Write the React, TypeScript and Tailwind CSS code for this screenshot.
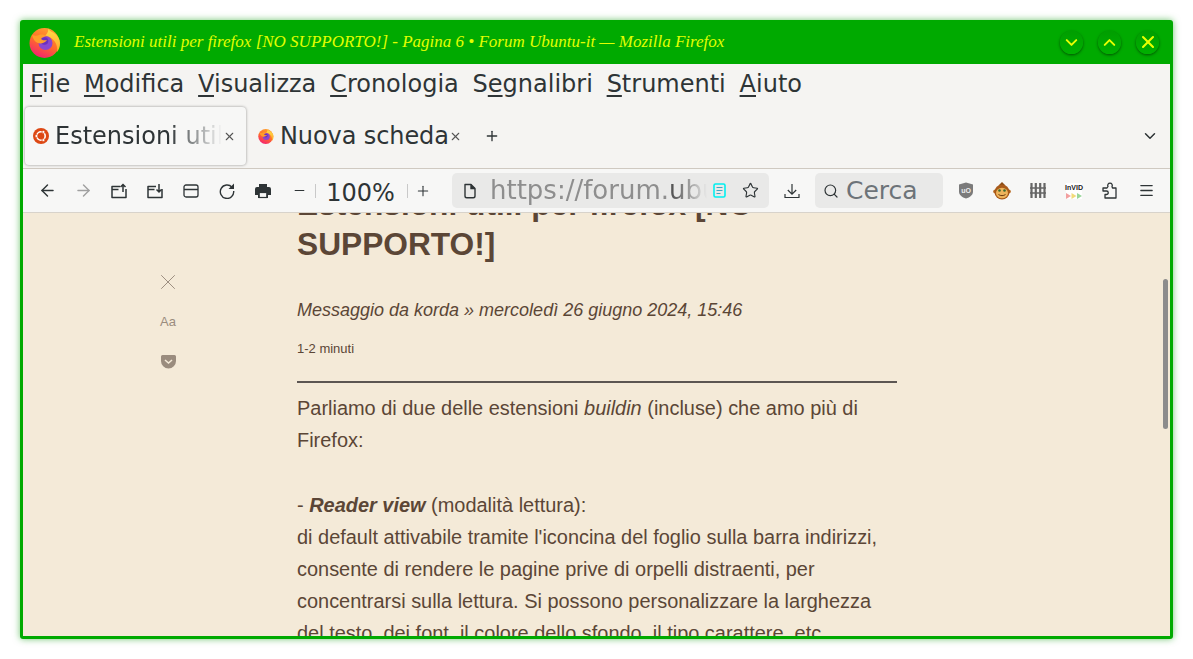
import { ReactNode } from "react";
import { ArrowLeft, ArrowRight, Star, Search, Menu, Plus, Minus, X, ChevronDown, ChevronUp } from "lucide-react";

const menuItems = [
  ["F", "ile"],
  ["M", "odifica"],
  ["V", "isualizza"],
  ["C", "ronologia"],
  ["Se", "gnalibri", "g"],
  ["S", "trumenti"],
  ["A", "iuto"],
];

const FirefoxLogo = ({ size }: { size: number }) => (
  <svg width={size} height={size} viewBox="0 0 32 32">
    <defs>
      <linearGradient id={`ff${size}`} x1="0.7" y1="0.1" x2="0.3" y2="0.95">
        <stop offset="0" stopColor="#ff9a2e" />
        <stop offset="0.5" stopColor="#ff6a2a" />
        <stop offset="1" stopColor="#f5256e" />
      </linearGradient>
      <linearGradient id={`fl${size}`} x1="0.5" y1="0" x2="0.5" y2="1">
        <stop offset="0" stopColor="#ffe24a" />
        <stop offset="1" stopColor="#ffa62a" />
      </linearGradient>
    </defs>
    <circle cx="15.500" cy="17" r="15" fill={`url(#ff${size})`} />
    <path d="M19 0c0 4 2 5 6 7 4 3 6 6 6 10 0 4-1 6-3 9 1-8-3-15-12-16 3-3 4-6 3-10z" fill={`url(#fl${size})`} />
    <circle cx="16.500" cy="17" r="7" fill="#8a46cf" />
    <circle cx="15.500" cy="15" r="3.800" fill="#6a2fc0" />
    <path d="M3 9c3 1 5 1 7 0 3-1 6 0 8 1-3 1-5 1-6 3 2 2 4 1 6 1-2 3-6 4-9 3-3-1-5-4-6-8z" fill="#ff9d2a" />
  </svg>
);

const UbuntuLogo = () => (
  <svg width="16" height="16" viewBox="0 0 16 16">
    <circle cx="8" cy="8" r="8" fill="#dd4814" />
    <circle cx="8" cy="8" r="4.200" fill="none" stroke="#fff" strokeWidth="1.600" />
    <circle cx="3.400" cy="8" r="1.500" fill="#fff" stroke="#dd4814" strokeWidth="0.700" />
    <circle cx="10.400" cy="3.900" r="1.500" fill="#fff" stroke="#dd4814" strokeWidth="0.700" />
    <circle cx="10.400" cy="12.100" r="1.500" fill="#fff" stroke="#dd4814" strokeWidth="0.700" />
  </svg>
);

const TitleButton = ({ children }: { children: ReactNode }) => (
  <div className="flex h-[23px] w-[23px] items-center justify-center rounded-full bg-gradient-to-b from-[#009e00] to-[#00b000] text-[#e8ff00] shadow-[0_1px_3px_rgba(0,60,0,0.8)]">
    {children}
  </div>
);

const ToolButton = ({ children, className }: { children: ReactNode; className?: string }) => (
  <div className={`flex h-9 w-9 shrink-0 items-center justify-center text-[#2e3436] ${className ?? ""}`}>
    {children}
  </div>
);

// cartella con freccia, su o giu
const FolderIcon = ({ down }: { down?: boolean }) => (
  <svg width="16" height="16" viewBox="0 0 16 16" fill="none" stroke="currentColor" strokeWidth="1.500">
    <path d="M9 3.500H1v11h14V6M1 6.500h6.500" strokeLinejoin="round" />
    {down ? <path d="M12 1v8M9.500 6.500 12 9l2.500-2.500" /> : <path d="M12 9V1.500M9.500 4 12 1.500 14.500 4" />}
  </svg>
);

const PrintIcon = () => (
  <svg width="16" height="16" viewBox="0 0 16 16">
    <path d="M4 1h8v3h2a2 2 0 0 1 2 2v6h-3v3H3v-3H0V6a2 2 0 0 1 2-2h2z" fill="currentColor" />
    <rect x="4.200" y="9.500" width="7.600" height="5" fill="#f7f7f6" stroke="currentColor" strokeWidth="1.200" />
  </svg>
);

const ReloadIcon = () => (
  <svg width="16" height="16" viewBox="0 0 16 16" fill="none" stroke="currentColor" strokeWidth="1.400">
    <path d="M13 4.200A6.700 6.700 0 1 0 14.700 8" />
    <path d="M15 .5v5.500H9.500z" fill="currentColor" stroke="none" />
  </svg>
);

const DocIcon = () => (
  <svg width="14" height="16" viewBox="0 0 14 16" fill="none" stroke="#2e3436" strokeWidth="1.400">
    <path d="M2 1.500h6l4 4v7.500a1.800 1.800 0 0 1-1.800 1.800H3.800A1.800 1.800 0 0 1 2 13z" strokeLinejoin="round" />
    <path d="M8 1.500v4h4" fill="#2e3436" />
  </svg>
);

const App = () => {
  return (
    <div className="h-[659px] w-[1193px] overflow-hidden bg-white p-5 font-['DejaVu_Sans',sans-serif]">
      <div className="flex h-[619px] w-[1153px] flex-col overflow-hidden rounded-[3px] bg-[#00aa00] px-[3px] pb-[3px] shadow-[0_0_7px_rgba(0,150,0,0.55)]">
        {/* title bar */}
        <div className="flex h-[44px] shrink-0 items-center pl-[6px] pr-[11px]">
          <FirefoxLogo size={32} />
          <div className="ml-[13px] font-['Liberation_Serif',serif] text-[17px] italic text-[#e2ff00]">
            Estensioni utili per firefox [NO SUPPORTO!] - Pagina 6 • Forum Ubuntu-it — Mozilla Firefox
          </div>
          <div className="ml-auto flex gap-[15px]">
            <TitleButton>
              <ChevronDown size={19} strokeWidth={2.500} />
            </TitleButton>
            <TitleButton>
              <ChevronUp size={19} strokeWidth={2.500} />
            </TitleButton>
            <TitleButton>
              <X size={20} strokeWidth={2.500} />
            </TitleButton>
          </div>
        </div>

        {/* menu */}
        <div className="flex h-[40px] shrink-0 items-center gap-[13.8px] bg-[#f5f4f2] pl-[7px] text-[24px] text-[#2e3436]">
          {menuItems.map((m) => (
            <span key={m[1]}>
              {m[2] ? (
                <>
                  S<span className="underline underline-offset-[3px]">e</span>
                  {m[1]}
                </>
              ) : (
                <>
                  <span className="underline underline-offset-[3px]">{m[0]}</span>
                  {m[1]}
                </>
              )}
            </span>
          ))}
        </div>

        {/* tabs */}
        <div className="flex h-[65px] shrink-0 items-center border-b border-[#cfc9c1] bg-[#f5f4f2] pl-[2px] text-[24px] text-[#2e3436]">
          <div className="flex h-[58px] w-[221px] items-center rounded-[4px] bg-[#f7f7f6] pl-[8px] shadow-[0_0_3px_rgba(0,0,0,0.4)]">
            <UbuntuLogo />
            <span className="ml-[6px] w-[167px] overflow-hidden whitespace-nowrap [mask-image:linear-gradient(to_right,black_68%,transparent_100%)]">
              Estensioni utili per firefox
            </span>
            <X size={13} className="ml-[1px] text-[#555]" />
          </div>
          <div className="ml-[12px] flex items-center">
            <FirefoxLogo size={16} />
            <span className="ml-[6px] tracking-[-0.1px]">Nuova scheda</span>
            <X size={13} className="text-[#555]" />
          </div>
          <Plus size={16} className="ml-[22px] text-[#2e3436]" />
          <ChevronDown size={18} className="ml-auto mr-[11px] text-[#2e3436]" />
        </div>

        {/* toolbar */}
        <div className="flex h-[44px] shrink-0 items-center border-b border-[#d8d3cb] bg-[#f7f7f6] pl-[6px]">
          <ToolButton>
            <ArrowLeft size={19} strokeWidth={1.800} />
          </ToolButton>
          <ToolButton className="!text-[#a0a0a0]">
            <ArrowRight size={19} strokeWidth={1.800} />
          </ToolButton>
          <ToolButton>
            <FolderIcon />
          </ToolButton>
          <ToolButton>
            <FolderIcon down />
          </ToolButton>
          <ToolButton>
            <svg width="16" height="14" viewBox="0 0 16 14" fill="none" stroke="currentColor" strokeWidth="1.300">
              <rect x="1" y="1" width="14" height="12" rx="2" />
              <path d="M1 5.500h14" />
            </svg>
          </ToolButton>
          <ToolButton>
            <ReloadIcon />
          </ToolButton>
          <ToolButton>
            <PrintIcon />
          </ToolButton>
          <ToolButton className="-mr-[2px]">
            <Minus size={15} strokeWidth={1.600} />
          </ToolButton>
          <div className="h-[14px] w-px bg-[#c9c9c9]" />
          <div className="w-[91px] pr-[2px] pt-[4px] text-center text-[24px] leading-none text-[#2e3436]">100%</div>
          <div className="h-[14px] w-px bg-[#c9c9c9]" />
          <div className="flex w-[30px] justify-center text-[#2e3436]">
            <Plus size={16} strokeWidth={1.600} />
          </div>
          <div className="ml-[14px] flex h-[35px] w-[317px] items-center rounded-[5px] bg-[#e9e9e8] pl-[11px]">
            <DocIcon />
            <span className="ml-[13px] w-[217px] overflow-hidden whitespace-nowrap text-[26px] text-[#8e8e8e] [mask-image:linear-gradient(to_right,black_84%,transparent_100%)]">
              https://forum.<span className="text-[#555]">ubuntu-it.org</span>
            </span>
            <svg width="13" height="15" viewBox="0 0 13 15" fill="none" stroke="#00f0f0" strokeWidth="1.600" className="ml-[6px]">
              <rect x="1" y="1" width="11" height="13" rx="1.500" />
              <path d="M3.500 4.500h6M3.500 7.500h6M3.500 10.500h4" stroke="#3fa7c4" strokeWidth="1.100" />
            </svg>
            <Star size={17} strokeWidth={1.600} className="ml-[16px] text-[#2e3436]" />
          </div>
          <ToolButton className="ml-[5px]">
            <svg width="16" height="16" viewBox="0 0 16 16" fill="none" stroke="currentColor" strokeWidth="1.200">
              <path d="M8 1v10M3.800 7 8 11.200 12.200 7M1 11v3.500h14V11" />
            </svg>
          </ToolButton>
          <div className="ml-[5px] flex h-[35px] w-[128px] items-center rounded-[5px] bg-[#e9e9e8] pl-[8px]">
            <Search size={16} strokeWidth={1.800} className="text-[#2e3436]" />
            <span className="ml-[7px] text-[25px] text-[#6d7378]">Cerca</span>
          </div>
          <ToolButton className="ml-[5px]">
            <svg width="16" height="17" viewBox="0 0 16 17">
              <path d="M8 .5 15 2.500v7c0 3.500-3 5.800-7 7-4-1.200-7-3.500-7-7v-7z" fill="#7b7b7b" />
              <text x="8" y="10.500" textAnchor="middle" fontSize="7" fontFamily="Liberation Sans" fontWeight="700" fill="#eee">
                uO
              </text>
            </svg>
          </ToolButton>
          <ToolButton>
            <svg width="18" height="18" viewBox="0 0 18 18">
              <path d="M9 0 12 3H6z" fill="#8a4b14" />
              <circle cx="2.200" cy="9.500" r="2" fill="#b5651d" />
              <circle cx="15.800" cy="9.500" r="2" fill="#b5651d" />
              <circle cx="9" cy="10" r="7.500" fill="#a85a1a" />
              <ellipse cx="9" cy="11" rx="6" ry="5.300" fill="#eeb45c" />
              <circle cx="6.500" cy="8.500" r="1.300" fill="#3a6b30" />
              <circle cx="11.500" cy="8.500" r="1.300" fill="#3a6b30" />
              <path d="M5.500 12.500c2 1.500 5 1.500 7 0" stroke="#6a3a10" strokeWidth="1" fill="none" />
            </svg>
          </ToolButton>
          <ToolButton>
            <svg width="16" height="15" viewBox="0 0 16 15" stroke="#666" fill="none">
              <path d="M1.500 0v15M5.800 0v15M10.200 0v15M14.500 0v15" strokeWidth="2.200" />
              <path d="M0 5h16M0 10h16" strokeWidth="1.500" />
            </svg>
          </ToolButton>
          <ToolButton>
            <div className="flex h-[16px] w-[16px] flex-col items-center bg-white">
              <span className="font-['Liberation_Sans',sans-serif] text-[7px] font-bold leading-[10px] text-[#222]">InVID</span>
              <svg width="16" height="6" viewBox="0 0 16 6">
                <path d="M0 0l5 3-5 3z" fill="#f2a0a0" />
                <path d="M5.500 0l5 3-5 3z" fill="#f2dc7a" />
                <path d="M11 0l5 3-5 3z" fill="#9ad69a" />
              </svg>
            </div>
          </ToolButton>
          <ToolButton>
            <svg width="16" height="17" viewBox="0 0 16 17" fill="none" stroke="currentColor" strokeWidth="1.300" strokeLinejoin="round">
              <path d="M1 6h4l1-1.500a2.300 2.300 0 1 1 4 0L10.500 6H14v10H3v-3.500h1.500a1.700 1.700 0 0 0 0-3.500H1z" />
            </svg>
          </ToolButton>
          <ToolButton>
            <Menu size={17} strokeWidth={1.800} />
          </ToolButton>
        </div>

        {/* reader view */}
        <div className="relative flex min-h-0 flex-1 overflow-hidden bg-[#f4ead8] font-['Liberation_Sans',sans-serif] text-[#5b4636]">
          <div className="ml-[122px] mr-[106px] flex w-[46px] shrink-0 flex-col items-center pt-[56px] text-[#9a8c7e]">
            <X size={26} strokeWidth={0.900} />
            <span className="mt-[17px] h-[20px] text-[13px] leading-[20px]">Aa</span>
            <svg width="15" height="14" viewBox="0 0 15 14" className="mt-[23px]">
              <path d="M1.500 0h12A1.500 1.500 0 0 1 15 1.500V6a7.500 7.500 0 0 1-15 0V1.500A1.500 1.500 0 0 1 1.500 0z" fill="#9a8c7e" />
              <path d="M4 5l3.500 3L11 5" stroke="#f4ead8" strokeWidth="1.600" fill="none" />
            </svg>
          </div>
          <div className="-mt-[29px] w-[600px] shrink-0">
            <h1 className="text-[31.700px] font-bold leading-[40px]">Estensioni utili per firefox [NO SUPPORTO!]</h1>
            <div className="mt-[30px] text-[18px] italic leading-[32px]">
              Messaggio da korda » mercoledì 26 giugno 2024, 15:46
            </div>
            <div className="mt-[11px] text-[13px] leading-[24px]">1-2 minuti</div>
            <div className="mt-[20px] h-[2px] bg-[#5c5652]" />
            <div className="mt-[9px] text-[19.950px] leading-[32px]">
              <p>
                Parliamo di due delle estensioni <i>buildin</i> (incluse) che amo più di Firefox:
              </p>
              <p className="mt-[33px]">
                - <b><i>Reader view</i></b> (modalità lettura):
                <br />
                di default attivabile tramite l'iconcina del foglio sulla barra indirizzi, consente di rendere le pagine
                prive di orpelli distraenti, per concentrarsi sulla lettura. Si possono personalizzare la larghezza del
                testo, dei font, il colore dello sfondo, il tipo carattere, etc.
              </p>
            </div>
          </div>
          {/* scrollbar */}
          <div className="absolute right-[2px] top-[66px] h-[150px] w-[5px] rounded-full bg-[#8c8c8c]" />
        </div>
      </div>
    </div>
  );
};

export default App;
